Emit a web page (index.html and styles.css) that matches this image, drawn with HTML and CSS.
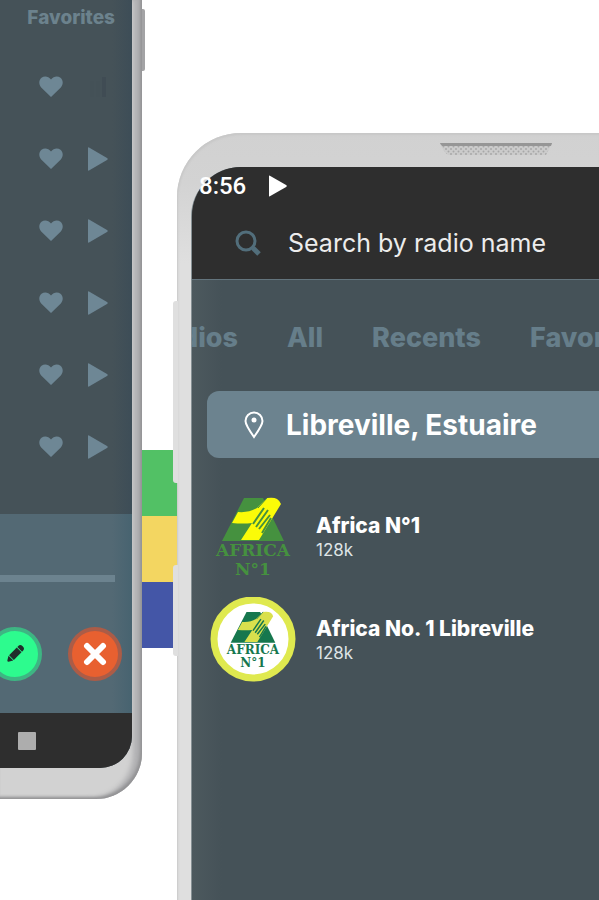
FILE: index.html
```html
<!DOCTYPE html>
<html lang="en">
<head>
<meta charset="utf-8">
<meta name="viewport" content="width=device-width">
<title>Radio</title>
<link rel="stylesheet" href="styles.css">
</head>
<body>
<svg class="defs" aria-hidden="true">
  <symbol id="heart" viewBox="0 0 24 22"><path d="M12 21 2.200 11.500C-.5 8.500-.3 4 2.500 1.800 5.500-.4 9.500.3 12 3.600 14.500.3 18.500-.4 21.500 1.800 24.300 4 24.500 8.500 21.800 11.500Z"/></symbol>
  <symbol id="play" viewBox="0 0 20 24"><path d="M1 .5 19 11q1.500 1 0 2L1 23.500Q0 24 0 23V1Q0 0 1 .5Z"/></symbol>
  <symbol id="emblem" viewBox="0 0 86 50">
    <path class="leaf" d="M34 4h19l21 43H12Z"/>
    <path class="sun" d="M28 18q11 1 19-4L57 4q7-1 10 1 3 2 4 5L49 46H31l11-17q-9 1-20 0Z"/>
    <path class="stripes" d="M54 14 43 30m15-14L46 33m14-12L49 35m12-11L52 39"/>
    <path class="stripes fine" d="m57 4-9 10"/>
  </symbol>
</svg>
<main class="page">
  <section class="phone phone-left">
    <div class="screen">
      <h2 class="column-title">Favorites</h2>
      <ul class="stations">
        <li><button aria-label="Favorite"><svg class="heart"><use href="#heart"/></svg></button><span class="bars"><i></i><i></i><i></i></span></li>
        <li><button aria-label="Favorite"><svg class="heart"><use href="#heart"/></svg></button><button aria-label="Play"><svg class="play"><use href="#play"/></svg></button></li>
        <li><button aria-label="Favorite"><svg class="heart"><use href="#heart"/></svg></button><button aria-label="Play"><svg class="play"><use href="#play"/></svg></button></li>
        <li><button aria-label="Favorite"><svg class="heart"><use href="#heart"/></svg></button><button aria-label="Play"><svg class="play"><use href="#play"/></svg></button></li>
        <li><button aria-label="Favorite"><svg class="heart"><use href="#heart"/></svg></button><button aria-label="Play"><svg class="play"><use href="#play"/></svg></button></li>
        <li><button aria-label="Favorite"><svg class="heart"><use href="#heart"/></svg></button><button aria-label="Play"><svg class="play"><use href="#play"/></svg></button></li>
      </ul>
      <div class="player">
        <progress value="0" max="100" aria-label="Playback"></progress>
        <div class="actions">
          <button class="round edit" aria-label="Edit"><svg viewBox="0 0 24 24"><g transform="rotate(45 12 12)"><path d="M8 2q0-3 4-3t4 3v2H8Z"/><path d="M8 5h8v13H8Z"/><path d="M8 19h8l-3 5q-1 1-2 0Z"/></g></svg></button>
          <button class="round close" aria-label="Close"><svg viewBox="0 0 24 24"><path d="m4 4 16 16M20 4 4 20"/></svg></button>
        </div>
      </div>
      <nav class="navbar"><button class="recent-apps" aria-label="Recent apps"></button></nav>
    </div>
    <span class="side-key"></span>
  </section>

  <div class="flag"><span class="green"></span><span class="yellow"></span><span class="blue"></span></div>

  <section class="phone phone-right">
    <svg class="speaker" viewBox="0 0 112 12">
      <defs><pattern id="holes" width="5" height="5" patternUnits="userSpaceOnUse"><circle cx="1" cy="1" r="1"/><circle cx="3.500" cy="3.500" r="1"/></pattern></defs>
      <path class="slot" d="M0 0h112l-6 12H8Q3 8 0 0Z"/><path fill="url(#holes)" d="M0 0h112l-6 12H8Q3 8 0 0Z"/><path class="lip" d="M0 0h112l-1 3H2Z"/>
    </svg>
    <span class="side-key volume"></span>
    <span class="side-key power"></span>
    <div class="screen">
      <header class="top">
        <div class="status"><span>8:56</span><svg class="play"><use href="#play"/></svg></div>
        <label class="search">
          <svg viewBox="0 0 26 26"><circle cx="11" cy="11" r="9"/><path class="handle" d="m18 18 6 6"/></svg>
          <input type="search" placeholder="Search by radio name" aria-label="Search by radio name">
        </label>
      </header>
      <nav class="tabs"><button class="cut">Radios</button><button>All</button><button>Recents</button><button>Favorites</button></nav>
      <button class="place"><svg viewBox="0 0 20 28"><path d="M10 26Q1.500 14 1.500 10a8.500 8.500 0 0 1 17 0Q18.500 14 10 26Z"/><circle cx="10" cy="9" r="2.500"/></svg>Libreville, Estuaire</button>
      <ul class="results">
        <li>
          <svg class="logo plain" viewBox="0 0 86 86"><use href="#emblem" width="86" height="50"/><text x="43" y="62">AFRICA</text><text x="43" y="81">N°1</text></svg>
          <div><h3>Africa N°1</h3><p>128k</p></div>
        </li>
        <li>
          <svg class="logo badge" viewBox="0 0 86 86"><circle cx="43" cy="42" r="39"/><use href="#emblem" x="12" y="12" width="62" height="36"/><text x="43" y="57">AFRICA</text><text x="43" y="70">N°1</text></svg>
          <div><h3>Africa No. 1 Libreville</h3><p>128k</p></div>
        </li>
      </ul>
    </div>
  </section>
</main>
</body>
</html>
```
FILE: styles.css
```css
* { box-sizing: border-box; }
body { margin: 0; background: #fff; font-family: Inter, "Liberation Sans", sans-serif; }
button { margin: 0; padding: 0; border: 0; background: none; font: inherit; color: inherit; display: block; }
ul { list-style: none; margin: 0; padding: 0; }
h2, h3, p { margin: 0; }
svg { display: block; flex: none; }
.defs { position: absolute; width: 0; height: 0; }

.page { display: grid; grid-template-columns: 142px 35px minmax(0, 1fr); min-height: 100vh; overflow: hidden; }
.phone { position: relative; }
.screen { background: #455258; }

/* Left device */
.phone-left {
  align-self: start;
  padding: 0 10px 31px 0;
  border-radius: 0 0 46px 0;
  background: #d2d2d2;
  box-shadow: inset -2px -2px 3px #929294, inset -9px 0 5px #b0b0b2;
}
.phone-left .screen { overflow: hidden; border-radius: 0 0 32px 0; background: linear-gradient(90deg, #455258 85%, #3d4d57); }
.phone-left .side-key { position: absolute; left: 142px; top: 9px; width: 3px; height: 62px; background: #a3a3a5; border-radius: 0 2px 2px 0; }
.column-title { height: 51px; padding: 7px 17px 0 0; text-align: right; font-size: 19px; line-height: 22px; font-weight: 800; color: #6c828d; }
.stations { padding-bottom: 31px; color: #6e8795; }
.stations li { height: 72px; display: flex; align-items: center; justify-content: flex-end; gap: 25px; padding-right: 24px; }
.heart { width: 24px; height: 22px; fill: currentColor; }
.play { width: 20px; height: 24px; fill: currentColor; }
.bars { width: 20px; height: 20px; display: flex; gap: 2px; align-items: flex-end; justify-content: center; }
.bars i { width: 4px; height: 16px; background: #445157; }
.bars i:last-child { height: 20px; background: #404c54; }
.player { height: 199px; padding: 61px 0 0; background: linear-gradient(90deg, #536974 85%, #476370); }
progress { appearance: none; display: block; width: 115px; height: 7px; border: 0; background: #6c838f; }
progress::-webkit-progress-bar { background: #6c838f; }
.actions { display: flex; justify-content: flex-end; gap: 26px; padding: 45px 10px 0 0; }
.round { width: 54px; height: 54px; flex: none; border-radius: 50%; display: grid; place-items: center; }
.edit { background: #2dfb8e; border: 4px solid #3eb583; }
.edit svg { width: 20px; height: 20px; fill: #202d2b; }
.close { background: #e86030; border: 4px solid #ab5c47; }
.close svg { width: 24px; height: 24px; fill: none; stroke: #fff; stroke-width: 6; stroke-linecap: round; }
.navbar { height: 55px; padding: 19px 0 0 18px; background: #2e2e2e; }
.recent-apps { width: 18px; height: 18px; border-radius: 1px; background: #adadad; }

/* Flag between the devices */
.flag { margin: 450px -6px 0 0; }
.flag span { display: block; height: 66px; }
.green { background: #52c165; }
.yellow { background: #f3d661; }
.blue { background: #4456a7; }

/* Right device */
.phone-right {
  display: flex;
  flex-direction: column;
  margin-top: 133px;
  padding: 0 0 0 14px;
  border-radius: 64px 0 0 0;
  background: linear-gradient(#d1d1d1, #d3d3d3 50px, #dfdfdf 130px);
  box-shadow: inset 1px 2px 2px #c8c8c8;
}
.speaker { width: 112px; height: 12px; margin: 10px 0 12px 249px; fill: #a8a8a8; }
.slot { fill: #cbcbcb; }
.lip { fill: #969696; }
.volume, .power { position: absolute; left: -4px; width: 5px; background: #dfdfdf; border-radius: 3px 0 0 3px; }
.volume { top: 168px; height: 182px; }
.power { top: 432px; height: 91px; }
.phone-right .screen { flex: 1; border-radius: 50px 0 0 0; border-left: 1px solid #869094; background: linear-gradient(90deg, #4d595e, #455258 30px); }
.top { height: 113px; border-radius: 49px 0 0 0; background: #2e2e2e; border-bottom: 1px solid #63747d; }
.status { display: flex; align-items: center; gap: 23px; height: 38px; padding-left: 7px; color: #fff; font: 500 24px/38px Roboto, sans-serif; }
.status .play { width: 18px; height: 22px; }
.search { display: flex; align-items: center; gap: 27px; height: 76px; padding-left: 43px; }
.search svg { width: 26px; height: 26px; fill: none; stroke: #526e7b; stroke-width: 3; }
.search .handle { stroke-width: 5; }
.search input { flex: 1; min-width: 0; padding: 0; border: 0; outline: 0; background: none; font: 400 25px/32px Inter, sans-serif; }
.search input::placeholder { color: #ececec; opacity: 1; }
.tabs { display: flex; gap: 49px; height: 111px; padding-top: 4px; align-items: center; overflow: hidden; font-size: 27px; line-height: 34px; font-weight: 800; color: #667e8a; }
.cut { width: 46px; flex: none; display: flex; justify-content: flex-end; overflow: hidden; }
.place { display: flex; align-items: center; gap: 22px; min-width: calc(100% - 15px); height: 67px; margin-left: 15px; padding-left: 37px; border-radius: 12px 0 0 12px; background: #6c838f; color: #fff; font-size: 28px; line-height: 34px; font-weight: 700; }
.place svg { width: 20px; height: 28px; fill: none; stroke: #fff; stroke-width: 2; }
.place circle { fill: #fff; stroke: none; }
.results { padding: 27px 0 0 18px; color: #fff; }
.results li { display: flex; align-items: center; gap: 20px; height: 103px; }
.results h3 { font-size: 21px; line-height: 26px; font-weight: 800; }
.results p { font-size: 17px; line-height: 22px; color: #dfe4e6; }
.logo { width: 86px; height: 86px; }
.logo text { text-anchor: middle; font-family: "DejaVu Serif", serif; font-weight: 700; }
.leaf { fill: var(--leaf); }
.sun { fill: var(--sun); }
.stripes { stroke: var(--leaf); stroke-width: 2; fill: none; }
.fine { stroke-width: 1; }
.plain { --leaf: #45913f; --sun: #fbfb08; }
.plain text { fill: #45913f; font-size: 17px; }
.badge { --leaf: #16774e; --sun: #d9e04d; }
.badge > circle { fill: #fff; stroke: #dfe94f; stroke-width: 7; }
.badge text { fill: #16774e; font-size: 12px; }
```
